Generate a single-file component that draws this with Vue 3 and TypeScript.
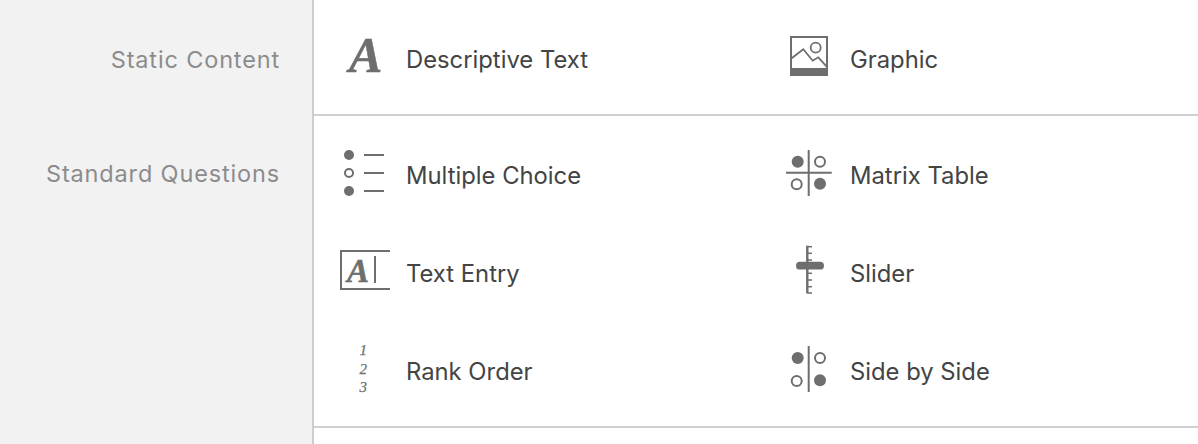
<script setup lang="ts">
type Item = { name: string; icon: string };
type Section = { label: string; key: string; items: Item[] };

const sections: Section[] = [
  {
    label: "Static Content",
    key: "static",
    items: [
      { name: "Descriptive Text", icon: "descriptive" },
      { name: "Graphic", icon: "graphic" },
    ],
  },
  {
    label: "Standard Questions",
    key: "standard",
    items: [
      { name: "Multiple Choice", icon: "multiple" },
      { name: "Matrix Table", icon: "matrix" },
      { name: "Text Entry", icon: "entry" },
      { name: "Slider", icon: "slider" },
      { name: "Rank Order", icon: "rank" },
      { name: "Side by Side", icon: "side" },
    ],
  },
];
const ticks = [-1.3, 5.3, 12, 25.3, 32, 38.7, 45];
</script>

<template>
  <div class="page">
    <section v-for="s in sections" :key="s.key" class="section" :class="s.key">
      <div class="label">{{ s.label }}</div>
      <div class="items">
        <div v-for="it in s.items" :key="it.name" class="item">
          <svg class="icon" viewBox="0 0 50 50" width="50" height="50" aria-hidden="true">
            <template v-if="it.icon === 'descriptive'">
              <text x="9" y="38" class="serif heavy" font-size="50">A</text>
            </template>
            <template v-else-if="it.icon === 'graphic'">
              <rect x="7" y="3" width="36" height="38" class="line" stroke-width="2" />
              <rect x="6" y="34" width="38" height="8" class="solid" />
              <circle cx="31.7" cy="13.7" r="5" class="line" stroke-width="1.8" />
              <polyline points="7.7,24.3 19.3,15.3 28.7,26.7 34.3,23.3 42.7,32.7" class="line" stroke-width="1.8" />
            </template>
            <template v-else-if="it.icon === 'multiple'">
              <circle cx="9" cy="5" r="5" class="solid" />
              <circle cx="9" cy="23" r="4" class="line" stroke-width="2" />
              <circle cx="9" cy="41" r="5" class="solid" />
              <path d="M24 5H44M24 23H44M24 41H44" class="line" stroke-width="2" />
            </template>
            <template v-else-if="it.icon === 'matrix'">
              <path d="M24.7 0V46M2 22.7H47.7" class="line" stroke-width="2" />
              <circle cx="13.7" cy="11.7" r="6" class="solid" />
              <circle cx="36" cy="11.7" r="5" class="line" stroke-width="2" />
              <circle cx="12.7" cy="34.3" r="5" class="line" stroke-width="2" />
              <circle cx="36" cy="33.7" r="6" class="solid" />
            </template>
            <template v-else-if="it.icon === 'entry'">
              <path d="M50 3H1V41H50" class="line" stroke-width="2" />
              <text x="7" y="34" class="serif heavy" font-size="33">A</text>
              <path d="M35 8V35" class="line" stroke-width="2" />
            </template>
            <template v-else-if="it.icon === 'slider'">
              <path d="M23.3 -2.3V45.3" class="line" stroke-width="2.4" />
              <path v-for="t in ticks" :key="t" :d="`M23.3 ${t}H28`" class="line" stroke-width="1.5" />
              <rect x="12" y="13.8" width="28" height="7.8" rx="3.9" class="solid" />
            </template>
            <template v-else-if="it.icon === 'rank'">
              <text x="23.3" y="9" class="digit">1</text>
              <text x="23.3" y="27.5" class="digit">2</text>
              <text x="23.3" y="46" class="digit">3</text>
            </template>
            <template v-else-if="it.icon === 'side'">
              <path d="M24.7 0V46" class="line" stroke-width="2" />
              <circle cx="13.7" cy="12" r="6" class="solid" />
              <circle cx="36" cy="12" r="5" class="line" stroke-width="2" />
              <circle cx="12.7" cy="35" r="5" class="line" stroke-width="2" />
              <circle cx="36" cy="34.3" r="6" class="solid" />
            </template>
          </svg>
          <span class="name">{{ it.name }}</span>
        </div>
      </div>
    </section>
    <div class="rest"><div class="rest-side"></div></div>
  </div>
</template>

<style>
html, body { margin: 0; background: #fff; }
</style>

<style scoped>
.page {
  width: 1198px;
  height: 444px;
  overflow: hidden;
  display: flex;
  flex-direction: column;
  font-family: Inter, "Noto Sans", sans-serif;
}
.section {
  display: grid;
  grid-template-columns: 314px 1fr;
}
.label {
  background: #f2f2f2;
  border-right: 2px solid #cdcdcd;
  box-sizing: border-box;
  padding-right: 32px;
  text-align: right;
  font-size: 23.5px;
  line-height: 30px;
  letter-spacing: 0.85px;
  color: #8c8c8c;
}
.static .label { padding-top: 45px; }
.standard .label { padding-top: 43px; }
.items {
  display: grid;
  grid-template-columns: 444px 1fr;
  grid-auto-rows: 98px;
  padding: 10px 0 6px 26px;
  border-bottom: 2px solid #d0d0d0;
}
.item {
  display: flex;
  align-items: center;
  gap: 16px;
}
.icon {
  flex: none;
  overflow: visible;
}
.name {
  font-size: 23.8px;
  line-height: 30px;
  padding-top: 2px;
  color: #444;
}
.line {
  fill: none;
  stroke: #6e6e6e;
}
.solid {
  fill: #6e6e6e;
}
.serif {
  font-family: "Liberation Serif", serif;
  font-style: italic;
  font-weight: 700;
  fill: #6e6e6e;
}
.heavy {
  stroke: #6e6e6e;
  stroke-width: 0.5px;
}
.digit {
  font-family: "Liberation Serif", serif;
  font-style: italic;
  font-size: 15px;
  text-anchor: middle;
  fill: #6e6e6e;
  stroke: #6e6e6e;
  stroke-width: 0.25px;
}
.rest {
  flex: 1;
}
.rest-side {
  width: 314px;
  height: 100%;
  box-sizing: border-box;
  background: #f2f2f2;
  border-right: 2px solid #cdcdcd;
}
</style>
